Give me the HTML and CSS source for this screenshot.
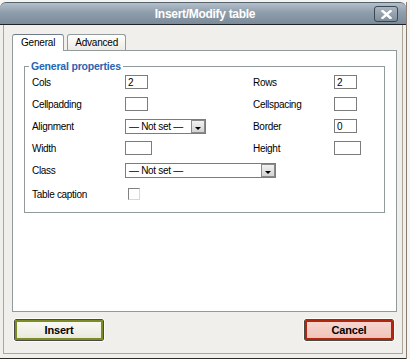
FILE: index.html
```html
<!DOCTYPE html>
<html lang="en">
<head>
  <meta charset="UTF-8" />
  <title>Insert/Modify table</title>
  <link rel="stylesheet" href="styles.css">
</head>
<body>
  <div class="window">
    <div class="titlebar">
      <span class="title">Insert/Modify table</span>
      <span class="close">
        <svg width="11" height="9" viewBox="0 0 11 9"><path d="M1.5 1 L9.5 8 M9.5 1 L1.5 8" stroke="#fff" stroke-width="2.4" stroke-linecap="square"/></svg>
      </span>
    </div>
    <div class="frame">
      <div class="inner">
        <div class="tabs">
          <span class="tab active">General</span>
          <span class="tab">Advanced</span>
        </div>
        <div class="panel">
          <fieldset class="props">
            <legend>General properties</legend>
            <div class="grid">
              <label>Cols</label>
              <span class="field"><input class="num" type="text" value="2" /></span>
              <label>Rows</label>
              <span class="field"><input class="num" type="text" value="2" /></span>

              <label>Cellpadding</label>
              <span class="field"><input class="num" type="text" /></span>
              <label>Cellspacing</label>
              <span class="field"><input class="num" type="text" /></span>

              <label>Alignment</label>
              <span class="field"><span class="select short">&mdash; Not set &mdash;<span class="arrow"></span></span></span>
              <label>Border</label>
              <span class="field"><input class="num" type="text" value="0" /></span>

              <label>Width</label>
              <span class="field"><input class="num wide" type="text" /></span>
              <label>Height</label>
              <span class="field"><input class="num wide" type="text" /></span>

              <label>Class</label>
              <span class="field span"><span class="select long">&mdash; Not set &mdash;<span class="arrow"></span></span></span>

              <label>Table caption</label>
              <span class="field"><span class="check"></span></span>
            </div>
          </fieldset>
        </div>
        <div class="actions">
          <button class="btn insert">Insert</button>
          <button class="btn cancel">Cancel</button>
        </div>
      </div>
    </div>
  </div>
</body>
</html>
```

FILE: styles.css
```css
body {
  margin: 0;
  background: #f4f4f2;
  font-family: 'Liberation Sans', Arial, sans-serif;
  font-size: 10px;
  color: #000;
}

.window {
  width: 406px;
  margin-top: 2px;
  border-right: 1px solid #8a7c70;
}

/* Titelleiste */
.titlebar {
  height: 21px;
  border-top: 1px solid #56646f;
  border-bottom: 1px solid #1f2326;
  border-radius: 6px 6px 0 0;
  background: linear-gradient(#b3bfca, #8f9eac 45%, #7b8b99);
  display: flex;
  align-items: center;
  justify-content: center;
  position: relative;
}

.title {
  color: #fff;
  font-weight: bold;
  font-size: 12px;
  letter-spacing: -0.3px;
  margin-left: 4px;
}

.close {
  position: absolute;
  right: 8px;
  top: 3px;
  width: 22px;
  height: 14px;
  border: 1px solid #3d4852;
  border-radius: 3px;
  background: linear-gradient(#a9b5c0, #7f8d9a);
  display: flex;
  align-items: center;
  justify-content: center;
}

.frame {
  background: #f0efeb;
  padding: 0 3px 4px 3px;
  border-bottom: 1px solid #2b2b2b;
}

.inner {
  border: 1px solid #aca899;
  border-top: none;
  padding: 8px 5px 12px 8px;
}

/* Reiter */
.tabs {
  display: flex;
  align-items: flex-end;
  gap: 3px;
  height: 17px;
}

.tab {
  height: 15px;
  padding: 0 7px;
  border: 1px solid #919b9c;
  border-bottom: none;
  border-radius: 3px 3px 0 0;
  background: linear-gradient(#ffffff, #eceae4);
  line-height: 16px;
  letter-spacing: -0.2px;
}

.tab.active {
  height: 16px;
  padding: 0 8px;
  background: #fff;
  border-top-color: #6d7c88;
  position: relative;
  z-index: 1;
  margin-bottom: -1px;
}

.panel {
  height: 251px;
  background: #fff;
  border: 1px solid #919b9c;
  padding: 9px 11px 0 11px;
}

.props {
  margin: 0;
  padding: 0 7px 5px 7px;
  border: 1px solid #919b9c;
}

.props legend {
  color: #2a64b0;
  font-weight: bold;
  font-size: 10.5px;
  line-height: 12px;
  padding: 0 2px;
  margin-left: -3px;
  letter-spacing: -0.2px;
}

.grid {
  display: grid;
  grid-template-columns: 93px 128px 81px 1fr;
  grid-template-rows: repeat(5, 22px) 26px;
  align-items: center;
  margin-top: -1px;
}

.grid label {
  letter-spacing: -0.3px;
}

.field {
  display: flex;
  align-items: center;
}

.field.span {
  grid-column: 2 / 5;
}

.num {
  width: 23px;
  height: 14px;
  box-sizing: border-box;
  border: 1px solid #7c7c7c;
  padding: 0 2px;
  font: 10px 'Liberation Sans', Arial, sans-serif;
  margin: 0;
}

.num.wide {
  width: 27px;
}

.select {
  height: 15px;
  box-sizing: border-box;
  border: 1px solid #7c7c7c;
  background: #fff;
  padding-left: 3px;
  line-height: 13px;
  letter-spacing: -0.3px;
  position: relative;
}

.select.short {
  width: 81px;
}

.select.long {
  width: 151px;
}

.arrow {
  position: absolute;
  right: 0;
  top: 0;
  width: 14px;
  height: 13px;
  box-sizing: border-box;
  border: 1px solid #8a8a8a;
  background: linear-gradient(#f2f2f2, #d3d3d3);
}

.arrow::after {
  content: "";
  position: absolute;
  left: 3px;
  bottom: 2px;
  border-left: 3px solid transparent;
  border-right: 3px solid transparent;
  border-top: 3px solid #000;
}

.check {
  width: 12px;
  height: 12px;
  box-sizing: border-box;
  margin-left: 3px;
  border: 1px solid #808080;
  border-right-color: #d8d8d8;
  border-bottom-color: #d8d8d8;
  background: #fff;
}

/* Schaltflächen */
.actions {
  display: flex;
  justify-content: space-between;
  padding: 7px 3px 0 2px;
}

.btn {
  width: 90px;
  height: 22px;
  border: 1px solid #4a4a44;
  border-radius: 2px;
  font: bold 11px 'Liberation Sans', Arial, sans-serif;
  letter-spacing: -0.2px;
  color: #000;
  padding: 0;
  outline: 1px solid #fbfbf8;
}

.btn.insert {
  background: linear-gradient(#fbfbf6, #e7e7dc);
  box-shadow: inset 0 0 0 2px #7f8c24;
}

.btn.cancel {
  background: linear-gradient(#f7d9d2, #efc1b7);
  box-shadow: inset 0 0 0 2px #b2260e;
}
```
